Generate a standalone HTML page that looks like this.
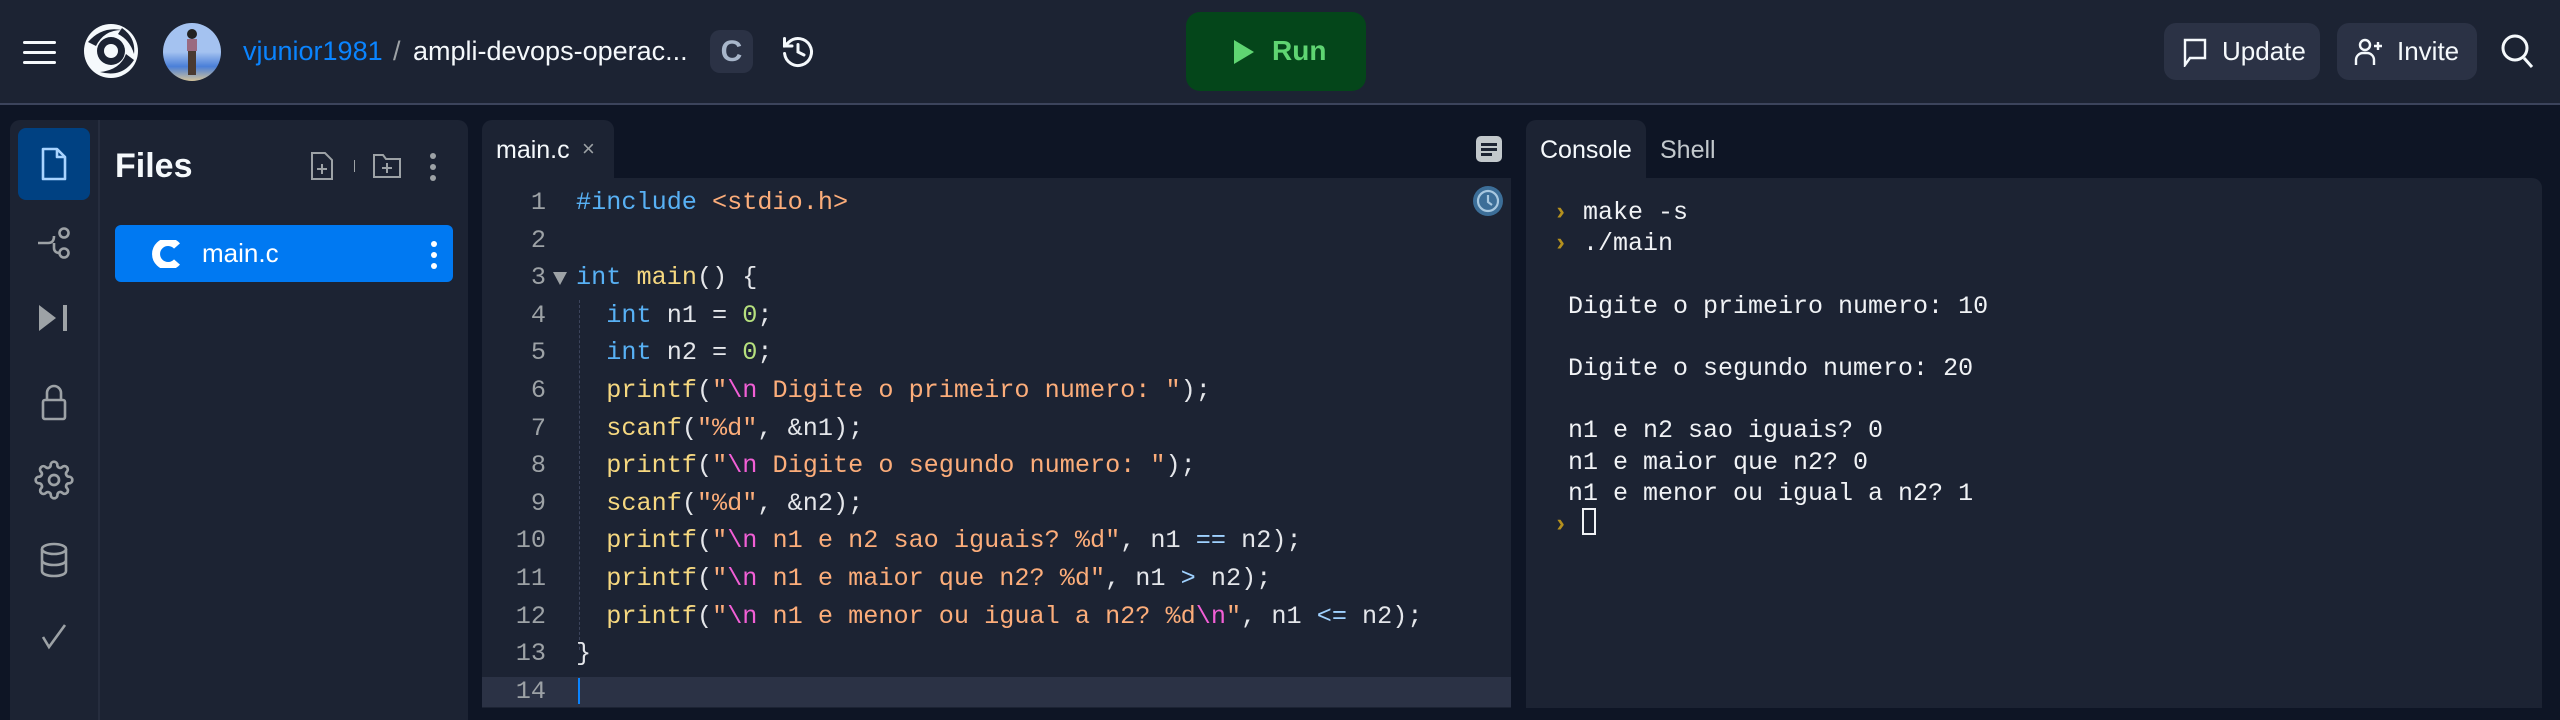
<!DOCTYPE html>
<html><head><meta charset="utf-8"><style>
*{margin:0;padding:0;box-sizing:border-box}
body{width:2560px;height:704px;background:#0e1525;position:relative;overflow:hidden;font-family:"Liberation Sans",sans-serif;color:#f5f9fc}
.a{position:absolute}
.hdr{left:0;top:0;width:2560px;height:105px;background:#1c2333;border-bottom:2px solid #3c445c}
.mono{font-family:"Liberation Mono","DejaVu Sans Mono",monospace}
.code{left:576px;top:184px;font-size:25.2px;line-height:37.6px;white-space:pre;color:#e4e6ea}
.ln{left:500px;width:46px;top:184px;font-size:25.2px;line-height:37.6px;text-align:right;color:#9da2a6;white-space:pre}
.k{color:#58b1f5}.f{color:#f6d880}.s{color:#fcad7a}.e{color:#f25fd6}.n{color:#b6e07e}.o{color:#9fd1ff}
.con{left:1553px;top:197px;font-size:25px;line-height:31.2px;white-space:pre;color:#f0f2f5}
.p{color:#b4901e;font-weight:bold}
.btn{background:#2b3245;border-radius:12px;height:57px;top:23px;font-size:26px;display:flex;align-items:center;color:#f5f9fc}
</style></head><body>
<div class="a hdr"></div>
<div class="a" style="left:23px;top:41px;width:33px;height:3px;background:#f5f9fc;border-radius:2px"></div>
<div class="a" style="left:23px;top:51px;width:33px;height:3px;background:#f5f9fc;border-radius:2px"></div>
<div class="a" style="left:23px;top:61px;width:33px;height:3px;background:#f5f9fc;border-radius:2px"></div>
<svg class="a" style="left:82px;top:22px" width="58" height="58" viewBox="0 0 58 58">
<circle cx="29" cy="29" r="27" fill="#f5f9fc"/>
<path d="M6 20 Q20 4 40 8 Q22 8 14 24 Z" fill="#1c2333"/>
<path d="M52 38 Q40 56 18 50 Q38 48 44 32 Z" fill="#1c2333"/>
<path d="M40 6 Q54 16 52 32 Q48 18 36 12Z" fill="#1c2333"/>
<circle cx="29" cy="29" r="14" fill="#1c2333"/><circle cx="29" cy="29" r="7" fill="#f5f9fc"/>
</svg>
<div class="a" style="left:163px;top:23px;width:58px;height:58px;border-radius:50%;background:linear-gradient(#a4c2f0 0%,#a4c2f0 50%,#4a7fd8 75%,#d2c29a 100%);overflow:hidden">
<div class="a" style="left:24px;top:6px;width:10px;height:10px;border-radius:50%;background:#222"></div>
<div class="a" style="left:24px;top:16px;width:10px;height:12px;background:#9a6a80"></div>
<div class="a" style="left:25px;top:28px;width:8px;height:24px;background:#4a3a30"></div>
</div>
<div class="a" style="left:243px;top:34px;font-size:27px;color:#0a84ff;line-height:34px">vjunior1981</div>
<div class="a" style="left:393px;top:34px;font-size:27px;color:#9da2a6;line-height:34px">/</div>
<div class="a" style="left:413px;top:34px;font-size:27px;color:#f5f9fc;line-height:34px">ampli-devops-operac...</div>
<div class="a" style="left:710px;top:30px;width:43px;height:43px;background:#2b3245;border-radius:10px;color:#a8b6ca;font-weight:bold;font-size:30px;text-align:center;line-height:43px">C</div>
<svg class="a" style="left:780px;top:34px" width="36" height="36" viewBox="0 0 24 24" fill="none" stroke="#f5f9fc" stroke-width="2" stroke-linecap="round"><path d="M3 3v5h5"/><path d="M3.05 13A9 9 0 1 0 6 5.3L3 8"/><path d="M12 7v5l4 2"/></svg>
<div class="a" style="left:1186px;top:12px;width:180px;height:79px;background:#04461a;border-radius:14px"></div>
<svg class="a" style="left:1234px;top:40px" width="20" height="24"><path d="M0 0L20 12L0 24Z" fill="#5fd572"/></svg>
<div class="a" style="left:1272px;top:34px;font-size:28px;line-height:34px;color:#5fd572;font-weight:bold">Run</div>
<div class="a btn" style="left:2164px;width:156px"><svg style="margin-left:18px" width="26" height="30" viewBox="0 0 26 30" fill="none" stroke="#f5f9fc" stroke-width="2.4"><path d="M3 28V3h20v18H8z"/></svg><span style="margin-left:14px">Update</span></div>
<div class="a btn" style="left:2337px;width:140px"><svg style="margin-left:16px" width="32" height="32" viewBox="0 0 32 32" fill="none" stroke="#f5f9fc" stroke-width="2.4"><circle cx="12" cy="9" r="5"/><path d="M3 29v-5a7 7 0 0 1 7-7h4a7 7 0 0 1 7 7v5M25 6v8M21 10h8"/></svg><span style="margin-left:12px">Invite</span></div>
<svg class="a" style="left:2500px;top:33px" width="34" height="36" viewBox="0 0 34 36" fill="none" stroke="#f5f9fc" stroke-width="3"><circle cx="15" cy="15" r="12"/><path d="M24 25l8 9"/></svg>
<div class="a" style="left:10px;top:120px;width:458px;height:600px;background:#1c2333;border-radius:10px 10px 0 0"></div>
<div class="a" style="left:98px;top:120px;width:2px;height:600px;background:#262d3e"></div>
<div class="a" style="left:18px;top:128px;width:72px;height:72px;background:#004182;border-radius:8px"></div>
<svg class="a" style="left:40px;top:146px" width="28" height="36" viewBox="0 0 28 36" fill="none" stroke="#a9d4ff" stroke-width="2.6" stroke-linejoin="round"><path d="M3 3h14l8 8v22H3z"/><path d="M17 3v8h8"/></svg>
<svg class="a" style="left:36px;top:226px" width="36" height="34" viewBox="0 0 36 34" fill="none" stroke="#9da2a6" stroke-width="2.6"><path d="M2 17h10c4 0 6-2 6-7v0M18 17v5c0 3 2 5 6 5"/><circle cx="28" cy="7" r="4.5"/><circle cx="28" cy="27" r="4.5"/></svg>
<svg class="a" style="left:36px;top:303px" width="36" height="30" viewBox="0 0 36 30"><path d="M3 2L20 15L3 28Z" fill="#9da2a6"/><rect x="27" y="2" width="4" height="26" fill="#9da2a6"/></svg>
<svg class="a" style="left:40px;top:382px" width="28" height="40" viewBox="0 0 28 40" fill="none" stroke="#9da2a6" stroke-width="2.6"><path d="M7 18V11a7 7 0 0 1 14 0v7"/><rect x="3" y="18" width="22" height="19" rx="2"/></svg>
<svg class="a" style="left:34px;top:460px" width="40" height="40" viewBox="0 0 24 24" fill="none" stroke="#9da2a6" stroke-width="1.6"><circle cx="12" cy="12" r="3"/><path d="M19.4 15a1.65 1.65 0 0 0 .33 1.82l.06.06a2 2 0 1 1-2.830 2.83l-.06-.06a1.65 1.65 0 0 0-1.82-.33 1.65 1.65 0 0 0-1 1.51V21a2 2 0 1 1-4 0v-.09A1.65 1.65 0 0 0 9 19.4a1.65 1.65 0 0 0-1.82.33l-.06.06a2 2 0 1 1-2.83-2.83l.06-.06A1.65 1.65 0 0 0 4.6 15a1.65 1.65 0 0 0-1.51-1H3a2 2 0 1 1 0-4h.09A1.65 1.65 0 0 0 4.6 9a1.65 1.65 0 0 0-.33-1.82l-.06-.06a2 2 0 1 1 2.83-2.83l.06.06A1.65 1.65 0 0 0 9 4.6a1.65 1.65 0 0 0 1-1.51V3a2 2 0 1 1 4 0v.09a1.65 1.65 0 0 0 1 1.51 1.65 1.65 0 0 0 1.82-.33l.06-.06a2 2 0 1 1 2.83 2.83l-.06.06A1.65 1.65 0 0 0 19.4 9a1.65 1.65 0 0 0 1.51 1H21a2 2 0 1 1 0 4h-.09a1.65 1.65 0 0 0-1.51 1z"/></svg>
<svg class="a" style="left:38px;top:542px" width="32" height="36" viewBox="0 0 32 36" fill="none" stroke="#9da2a6" stroke-width="2.6"><ellipse cx="16" cy="7" rx="12" ry="5"/><path d="M4 7v22c0 3 5 5 12 5s12-2 12-5V7M4 18c0 3 5 5 12 5s12-2 12-5"/></svg>
<svg class="a" style="left:40px;top:622px" width="28" height="28" viewBox="0 0 28 28" fill="none" stroke="#9da2a6" stroke-width="2.6"><path d="M3 15l6 10L25 3"/></svg>
<div class="a" style="left:115px;top:146px;font-size:34px;font-weight:bold;line-height:40px">Files</div>
<svg class="a" style="left:310px;top:151px" width="24" height="30" viewBox="0 0 24 30" fill="none" stroke="#9da2a6" stroke-width="2"><path d="M2 2h13l7 7v19H2z"/><path d="M12 13v10M7 18h10"/></svg>
<div class="a" style="left:354px;top:160px;width:1px;height:12px;background:#9da2a6"></div>
<svg class="a" style="left:372px;top:153px" width="30" height="26" viewBox="0 0 30 26" fill="none" stroke="#9da2a6" stroke-width="2"><path d="M2 2h9l3 4h14v18H2z"/><path d="M15 10v10M10 15h10"/></svg>
<div class="a" style="left:430px;top:153px;width:6px;height:6px;border-radius:50%;background:#9da2a6;box-shadow:0 11px 0 #9da2a6,0 22px 0 #9da2a6"></div>
<div class="a" style="left:115px;top:225px;width:338px;height:57px;background:#0079f2;border-radius:6px"></div>
<svg class="a" style="left:150px;top:240px" width="30" height="28" viewBox="0 0 30 28"><path d="M27 6A12 12 0 1 0 27 22" fill="none" stroke="#fff" stroke-width="8"/></svg>
<div class="a" style="left:202px;top:237px;font-size:26px;line-height:32px;color:#fff">main.c</div>
<div class="a" style="left:431px;top:241px;width:6px;height:6px;border-radius:50%;background:#fff;box-shadow:0 11px 0 #fff,0 22px 0 #fff"></div>
<div class="a" style="left:482px;top:120px;width:132px;height:60px;background:#1c2333;border-radius:10px 10px 0 0"></div>
<div class="a" style="left:496px;top:134px;font-size:25px;line-height:32px">main.c</div>
<div class="a" style="left:582px;top:134px;font-size:22px;line-height:30px;color:#9da2a6">×</div>
<div class="a" style="left:482px;top:178px;width:1029px;height:530px;background:#1c2333"></div>
<div class="a" style="left:482px;top:677px;width:1029px;height:30px;background:#2b3245"></div>
<div class="a" style="left:578px;top:678px;width:2px;height:26px;background:#0a84ff"></div>
<div class="a" style="left:1476px;top:136px;width:26px;height:26px;border-radius:5px;background:#c2c8cc"></div>
<div class="a" style="left:1481px;top:143px;width:16px;height:3px;background:#1c2333;box-shadow:0 5px 0 #1c2333"></div>
<div class="a" style="left:1481px;top:153px;width:11px;height:3px;background:#1c2333"></div>
<svg class="a" style="left:1472px;top:185px" width="32" height="32" viewBox="0 0 32 32"><circle cx="16" cy="16" r="15" fill="#3c6e98"/><circle cx="16" cy="16" r="10" fill="none" stroke="#a8c8e0" stroke-width="2.2"/><path d="M16 10v7l4 3" stroke="#a8c8e0" stroke-width="2.2" fill="none"/></svg>
<div class="a" style="left:579px;top:300px;width:0;height:350px;border-left:1px dashed #3c445c"></div>
<div class="a mono ln">1
2
3
4
5
6
7
8
9
10
11
12
13
14</div>
<div class="a" style="left:553px;top:272px;width:0;height:0;border-left:7px solid transparent;border-right:7px solid transparent;border-top:13px solid #9da2a6"></div>
<div class="a mono code"><span class="k">#include</span> <span class="s">&lt;stdio.h&gt;</span>

<span class="k">int</span> <span class="f">main</span>() {
  <span class="k">int</span> n1 = <span class="n">0</span>;
  <span class="k">int</span> n2 = <span class="n">0</span>;
  <span class="f">printf</span>(<span class="s">"</span><span class="e">\n</span><span class="s"> Digite o primeiro numero: "</span>);
  <span class="f">scanf</span>(<span class="s">"%d"</span>, &amp;n1);
  <span class="f">printf</span>(<span class="s">"</span><span class="e">\n</span><span class="s"> Digite o segundo numero: "</span>);
  <span class="f">scanf</span>(<span class="s">"%d"</span>, &amp;n2);
  <span class="f">printf</span>(<span class="s">"</span><span class="e">\n</span><span class="s"> n1 e n2 sao iguais? %d"</span>, n1 <span class="o">==</span> n2);
  <span class="f">printf</span>(<span class="s">"</span><span class="e">\n</span><span class="s"> n1 e maior que n2? %d"</span>, n1 <span class="o">&gt;</span> n2);
  <span class="f">printf</span>(<span class="s">"</span><span class="e">\n</span><span class="s"> n1 e menor ou igual a n2? %d</span><span class="e">\n</span><span class="s">"</span>, n1 <span class="o">&lt;=</span> n2);
}
</div>
<div class="a" style="left:1526px;top:120px;width:120px;height:60px;background:#1c2333;border-radius:10px 10px 0 0"></div>
<div class="a" style="left:1540px;top:135px;font-size:25px;line-height:30px">Console</div>
<div class="a" style="left:1660px;top:135px;font-size:25px;line-height:30px;color:#c2c8cc">Shell</div>
<div class="a" style="left:1526px;top:178px;width:1016px;height:530px;background:#1c2333;border-radius:0 10px 0 0"></div>
<div class="a mono con"><span class="p">›</span> make -s
<span class="p">›</span> ./main

 Digite o primeiro numero: 10

 Digite o segundo numero: 20

 n1 e n2 sao iguais? 0
 n1 e maior que n2? 0
 n1 e menor ou igual a n2? 1
<span class="p">›</span> </div>
<div class="a" style="left:1582px;top:508px;width:14px;height:27px;border:2px solid #f0f2f5"></div>
</body></html>
